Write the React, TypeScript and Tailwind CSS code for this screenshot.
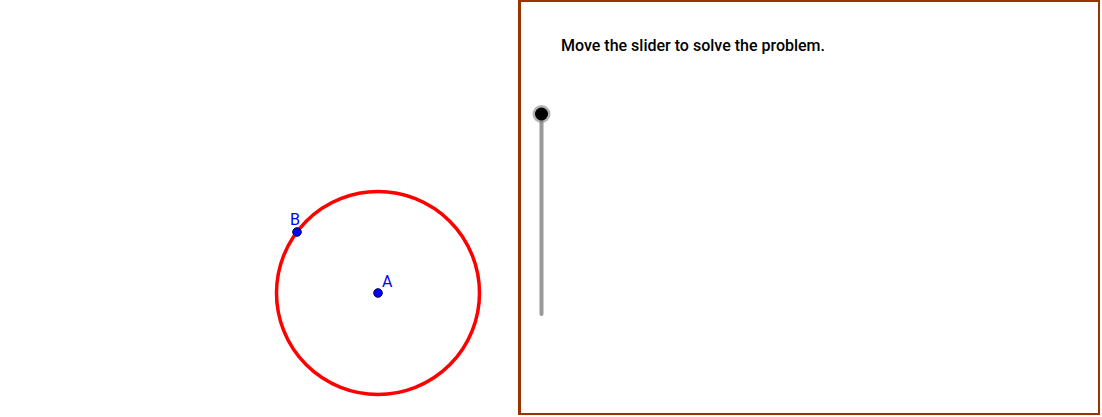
import React from "react";

export default function App() {
  return (
    <div className="flex h-[417px] w-[1102px] bg-white overflow-hidden" style={{ fontFamily: "Roboto, 'Liberation Sans', sans-serif" }}>
      <div className="relative h-[417px] w-[518px] shrink-0">
        <svg width="518" height="417" className="absolute left-0 top-0">
          <circle cx="378" cy="293" r="101.5" fill="none" stroke="#ff0000" strokeWidth="3.5" />
          <circle cx="297" cy="232" r="4.3" fill="#0000ff" stroke="#00004d" strokeWidth="1" />
          <circle cx="378" cy="293" r="4.3" fill="#0000ff" stroke="#00004d" strokeWidth="1" />
          <text x="290" y="225" fill="#0000ff" fontSize="16" fontFamily="Roboto, 'Liberation Sans', sans-serif">B</text>
          <text x="382" y="287" fill="#0000ff" fontSize="16" fontFamily="Roboto, 'Liberation Sans', sans-serif">A</text>
        </svg>
      </div>
      <div className="relative h-[415px] w-[582px] shrink-0 border-t-2 border-r-2 border-b-2 border-l-[3px] border-[#993300]">
        <div className="pl-[40px] pt-[34px] text-[16px] font-medium leading-[20px] text-black">
          Move the slider to solve the problem.
        </div>
        <svg width="40" height="240" className="absolute left-0 top-[100px]">
          <line x1="20.5" y1="12" x2="20.5" y2="212" stroke="#999999" strokeWidth="4" strokeLinecap="round" />
          <circle cx="20.5" cy="12" r="9" fill="#808080" fillOpacity="0.6" />
          <circle cx="20.5" cy="12" r="6.5" fill="#000000" />
        </svg>
      </div>
    </div>
  );
}
